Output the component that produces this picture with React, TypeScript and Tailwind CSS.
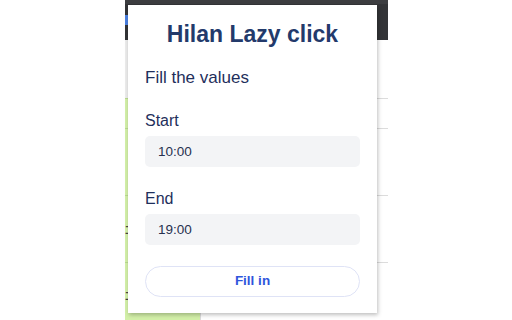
import { useState } from 'react';

function TimeField({ label, value, onChange }: { label: string; value: string; onChange: (v: string) => void }) {
  return (
    <div className="flex flex-col">
      <label className="text-[16px] leading-[20px] text-[#1f2f5c]">{label}</label>
      <input
        value={value}
        onChange={(e) => onChange(e.target.value)}
        className="mt-[5px] h-[31px] w-full rounded-[5px] bg-[#f3f4f6] px-[13px] text-[13.5px] text-[#27314f] outline-none"
      />
    </div>
  );
}

export default function App() {
  const [start, setStart] = useState('10:00');
  const [end, setEnd] = useState('19:00');

  return (
    <div className="relative w-[512px] h-[320px] overflow-hidden bg-white font-['Liberation_Sans',Arial,sans-serif]">
      {/* page behind the popup */}
      <div className="ml-[125px] flex h-full w-[263px] flex-col">
        <div className="flex h-[40px] bg-[#333437] border-t-[4px] border-[#3c3d40]">
          <div className="mt-[11px] h-[10px] w-[5px] bg-[#4a7fe0]" />
        </div>
        <div className="grid h-[58px] grid-cols-[75px_1fr]">
          <div className="bg-[#ececec]" />
          <div className="bg-white" />
        </div>
        <div className="grid flex-1 grid-cols-[75px_1fr] grid-rows-[30px_67px_67px_1fr]">
          <div className="border-t border-[#b9d98f] bg-[#d3f0a8]" />
          <div className="border-t border-l border-[#dcdcdc]" />
          <div className="border-t border-[#b9d98f] bg-[#d3f0a8]" />
          <div className="border-t border-l border-[#dcdcdc]" />
          <div className="flex items-center border-t border-[#b9d98f] bg-[#d3f0a8] text-[14px] text-[#444]">ב</div>
          <div className="border-t border-l border-[#dcdcdc]" />
          <div className="flex items-start pt-[22px] border-t border-[#b9d98f] bg-[#d3f0a8] text-[14px] text-[#444]">ב</div>
          <div className="border-t border-l border-[#dcdcdc]" />
        </div>
      </div>

      {/* extension popup */}
      <div className="absolute left-[128px] top-[5px] flex w-[249px] flex-col bg-white px-[17px] pt-[15px] pb-[16px] shadow-[1px_2px_4px_rgba(0,0,0,0.25)]">
        <h1 className="text-center text-[23px] font-bold leading-[28px] text-[#233a6b]">Hilan Lazy click</h1>
        <p className="mt-[20px] text-[17px] leading-[20px] text-[#1f2f5c]">Fill the values</p>
        <div className="mt-[23px]">
          <TimeField label="Start" value={start} onChange={setStart} />
        </div>
        <div className="mt-[22px]">
          <TimeField label="End" value={end} onChange={setEnd} />
        </div>
        <button className="mt-[21px] h-[31px] w-full rounded-full border border-[#dfe3f6] bg-white text-[13.5px] font-bold text-[#2f55dc]">
          Fill in
        </button>
      </div>
    </div>
  );
}
